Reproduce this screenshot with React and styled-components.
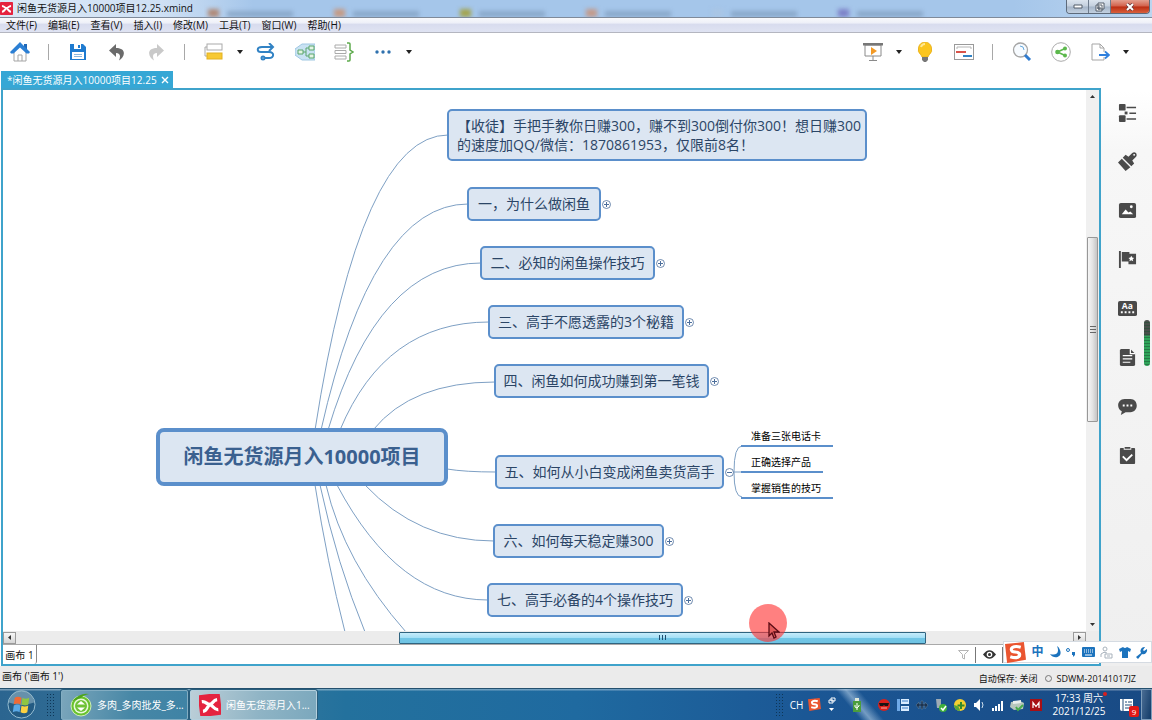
import styled, { createGlobalStyle, css } from "styled-components";

const GlobalStyle = createGlobalStyle`
  * {
    box-sizing: border-box;
  }
  body {
    margin: 0;
    background-color: #ebebeb;
    color: #111;
    font-family: "Open Sans", "Noto Sans CJK SC", sans-serif;
    font-size: 10px;
    line-height: 14px;
  }
  button {
    margin: 0;
    padding: 0;
    border: none;
    background: none;
    color: inherit;
    font: inherit;
  }
  svg {
    display: block;
    flex-shrink: 0;
  }
`;

const Window = styled.div`
  position: relative;
  display: flex;
  flex-direction: column;
  height: 100vh;
  overflow: hidden;
`;

/* ---------- title bar and menu ---------- */

const TitleBar = styled.header`
  display: flex;
  height: 18px;
  overflow: hidden;
  background: linear-gradient(90deg, #dbe8f6 0%, #cfe0f4 14%, #a5c6ea 22%, #a5c6ea 88%, #bcd5ef 100%);
  border-bottom: 1px solid #7f8a9a;
`;
const AppTitle = styled.h1`
  display: flex;
  align-items: center;
  gap: 4px;
  width: 204px;
  height: 16px;
  margin: 0;
  font-size: 10px;
  font-weight: 400;
  white-space: nowrap;
`;
const GhostTabs = styled.div`
  display: flex;
  flex: 1;
  align-items: flex-end;
  overflow: hidden;
`;
const GhostTab = styled.div`
  display: flex;
  align-items: flex-end;
  gap: 8px;
  width: 126px;
  padding-left: 4px;
  filter: blur(2px);
  &::before {
    content: "";
    width: 11px;
    height: 8px;
    background-color: ${(props) => props.$color};
  }
  &::after {
    content: "";
    width: 66px;
    height: 6px;
    background-color: #7f9cbd;
    opacity: 0.7;
  }
`;
const WindowButtons = styled.div`
  display: flex;
  height: 14px;
  margin-right: 2px;
  border: 1px solid #5d6a7a;
  border-top: none;
  border-radius: 0 0 4px 4px;
  overflow: hidden;
`;
const WindowButton = styled.button`
  display: flex;
  align-items: center;
  justify-content: center;
  width: ${(props) => (props.$close ? 38 : 22)}px;
  border-right: 1px solid #6d7b8c;
  background: linear-gradient(#dbe4ee, #c3cfdd 48%, #a5b5c8 52%, #c2d0e0);
  ${(props) =>
    props.$close &&
    css`
      border-right: none;
      background: linear-gradient(#e3a090, #d2604a 48%, #bb2c12 52%, #d9603c);
    `}
`;

const MenuBar = styled.nav`
  display: flex;
  align-items: center;
  gap: 11px;
  height: 15px;
  padding-left: 6px;
  background: linear-gradient(#f8f9fc 0%, #eef0f8 35%, #d8dcee 45%, #dfe3f2 100%);
  border-bottom: 1px solid #b4b6c0;
`;
const MenuItem = styled.button`
  white-space: nowrap;
`;

/* ---------- toolbar ---------- */

const Toolbar = styled.div`
  display: flex;
  align-items: center;
  justify-content: space-between;
  height: 38px;
  padding-right: 20px;
  background-color: #fff;
`;
const ToolGroup = styled.div`
  display: flex;
  align-items: center;
`;
const Tool = styled.button`
  display: flex;
  align-items: center;
  justify-content: center;
  width: ${(props) => (props.$caret ? 13 : 39)}px;
  height: 30px;
`;
const ToolDivider = styled.span`
  width: 1px;
  height: 16px;
  margin: 0 9px;
  background-color: #a8a8a8;
`;

/* ---------- workspace ---------- */

const Workspace = styled.div`
  display: flex;
  flex: 1;
  min-height: 0;
  background-color: #fff;
`;
const Editor = styled.main`
  display: flex;
  flex: 1;
  flex-direction: column;
  min-width: 0;
  padding-left: 1px;
`;
const FileTab = styled.div`
  display: flex;
  align-items: center;
  align-self: flex-start;
  gap: 4px;
  height: 17px;
  padding: 0 4px 0 6px;
  background-color: #36a7d5;
  color: #fff;
  white-space: nowrap;
`;
const EditorFrame = styled.div`
  display: flex;
  flex: 1;
  flex-direction: column;
  min-height: 0;
  border: 2px solid #3fa3cb;
`;
const CanvasRow = styled.div`
  display: flex;
  flex: 1;
  min-height: 0;
`;
const Canvas = styled.section`
  position: relative;
  flex: 1;
  overflow: hidden;
  background-color: #fff;
`;
const Links = styled.svg`
  position: absolute;
  top: 0;
  left: 0;
`;

const Branch = styled.div`
  position: absolute;
  left: ${(props) => props.$x}px;
  top: ${(props) => props.$y}px;
  display: flex;
  align-items: center;
  gap: 1px;
`;
const Topic = styled.div`
  display: flex;
  align-items: center;
  justify-content: center;
  width: ${(props) => props.$width}px;
  min-height: 34px;
  padding: 4px 0 6px;
  border: 2px solid #5b8fcb;
  border-radius: 5px;
  background-color: #dce6f2;
  color: #2b4566;
  font-size: 14px;
  line-height: 19px;
  white-space: pre;
`;
const NoticeTopic = styled(Topic)`
  min-height: 52px;
  padding: 5px 0 5px 8px;
  justify-content: flex-start;
`;
const CentralTopic = styled(Topic)`
  min-height: 58px;
  border: 4px solid #5b8fcb;
  border-radius: 8px;
  color: #3a608f;
  font-size: 20px;
  font-weight: 700;
`;
const Toggle = styled.button`
  display: flex;
`;
const Leaves = styled.ul`
  position: absolute;
  left: 738px;
  top: 331px;
  display: flex;
  flex-direction: column;
  align-items: flex-start;
  margin: 0;
  padding: 0;
  list-style: none;
`;
const Leaf = styled.li`
  height: 26px;
  padding: 8px 12px 0 10px;
  border-bottom: 2px solid #5b8fcb;
  color: #000;
  white-space: nowrap;
`;

const VScroll = styled.div`
  display: flex;
  flex-direction: column;
  width: 13px;
  background-color: #f0f0f0;
`;
const VTrack = styled.div`
  display: grid;
  flex: 1;
  grid-template-rows: 133fr 185fr 195fr;
`;
const VThumb = styled.div`
  grid-row: 2;
  display: flex;
  align-items: center;
  justify-content: center;
  margin: 0 1px;
  border: 1px solid #989898;
  border-radius: 1px;
  background: linear-gradient(90deg, #f6f6f6, #e3e3e3 50%, #c5c5c5);
`;
const ScrollArrow = styled.button`
  display: flex;
  align-items: center;
  justify-content: center;
  width: 13px;
  height: 13px;
`;
const HScroll = styled.div`
  display: flex;
  align-items: center;
  height: 14px;
  padding-right: 13px;
  background-color: #ececec;
  border-bottom: 1px solid #a9a9a9;
`;
const HTrack = styled.div`
  display: grid;
  flex: 1;
  grid-template-columns: 383fr 527fr 147fr;
  height: 12px;
`;
const HThumb = styled.div`
  grid-column: 2;
  display: flex;
  align-items: center;
  justify-content: center;
  border: 1px solid #2f6480;
  border-radius: 1px;
  background: linear-gradient(#c6ecfb, #a5e0f6 45%, #71c6e6 55%, #6fc3e3);
`;
const BoxedArrow = styled(ScrollArrow)`
  height: 12px;
  border: 1px solid #9a9a9a;
  background: linear-gradient(#f7f7f7, #d5d5d5);
`;

const SheetBar = styled.div`
  display: flex;
  align-items: stretch;
  justify-content: space-between;
  height: 19px;
  background-color: #fff;
`;
const SheetTab = styled.button`
  width: 34px;
  border-right: 1px solid #8a8a8a;
  border-bottom-right-radius: 3px;
  white-space: nowrap;
`;
const SheetTools = styled.div`
  display: flex;
  align-items: center;
  margin-right: 96px;
`;
const SheetTool = styled.button`
  display: flex;
  align-items: center;
  justify-content: center;
  width: ${(props) => props.$width}px;
  height: 16px;
  border-right: 1px solid #777;
`;

const Sidebar = styled.aside`
  display: flex;
  flex-direction: column;
  width: 51px;
  padding: 17px 0 0 1px;
  background: linear-gradient(#fff 20px, #f7f7f7 80px, #efefef);
`;
const SideButton = styled.button`
  display: flex;
  align-items: center;
  justify-content: center;
  height: 49px;
`;

const StatusBar = styled.footer`
  display: flex;
  justify-content: space-between;
  height: 22px;
  padding: 3px 16px 0 2px;
  background-color: #ebebeb;
`;
const StatusInfo = styled.div`
  display: flex;
  align-items: center;
  gap: 8px;
  font-size: 9px;
`;
const HostName = styled.span`
  display: flex;
  align-items: center;
  gap: 4px;
  &::before {
    content: "";
    width: 5px;
    height: 5px;
    border: 1px solid #777;
    border-radius: 50%;
  }
`;

/* ---------- things floating over the window ---------- */

const ClickSpot = styled.div`
  position: absolute;
  left: 749px;
  top: 604px;
  width: 38px;
  height: 38px;
  border-radius: 50%;
  background-color: rgba(255, 50, 50, 0.62);
  svg {
    position: absolute;
    left: 19px;
    top: 18px;
  }
`;
const VolumeMeter = styled.div`
  position: absolute;
  right: 2px;
  top: 320px;
  width: 6px;
  height: 46px;
  border-radius: 3px;
  background: repeating-linear-gradient(transparent 0 2px, rgba(30, 80, 50, 0.5) 2px 3px),
    linear-gradient(#4a4f4c 32%, #2fa45a 36%);
`;
const ImeBar = styled.div`
  position: absolute;
  right: 0;
  bottom: 57px;
  display: flex;
  align-items: center;
  justify-content: space-between;
  width: 149px;
  height: 22px;
  padding: 0 3px 0 1px;
  border: 1px solid #d5dbe2;
  background-color: #fff;
  color: #1c73bd;
  font-size: 12px;
  font-weight: 700;
`;

/* ---------- taskbar ---------- */

const Taskbar = styled.div`
  display: flex;
  align-items: center;
  height: 32px;
  border-top: 1px solid #24506e;
  background: linear-gradient(rgba(255, 255, 255, 0.35) 1px, transparent 2px),
    linear-gradient(90deg, #2b6590 0%, #3a7a9c 20%, #23719d 30%, #1f6aa0 50%, #1b5795 70%, #194a84 100%);
  color: #fff;
`;
const StartButton = styled.button`
  display: flex;
  justify-content: center;
  width: 43px;
`;
const Grip = styled.span`
  width: 8px;
  height: 24px;
  margin: 0 5px 0 3px;
  background-image: radial-gradient(circle, #0e3657 1px, transparent 1px);
  background-size: 3px 3px;
`;
const TaskButton = styled.button`
  display: flex;
  align-items: center;
  gap: 5px;
  width: 127px;
  height: 30px;
  margin-left: 2px;
  padding-left: 8px;
  border: 1px solid ${(props) => (props.$active ? "#b4d0dd" : "#82adc2")};
  border-radius: 2px;
  background: ${(props) =>
    props.$active
      ? "linear-gradient(100deg, #bccfd8, #8fb4c5 55%, #7ba8bd)"
      : "linear-gradient(100deg, #7ba6bb, #4787a6 55%, #3f83a5)"};
  box-shadow: 0 0 0 1px #285d7c;
  white-space: nowrap;
`;
const Tray = styled.div`
  display: flex;
  align-items: center;
  height: 100%;
  margin-left: auto;
  background: linear-gradient(50deg, transparent 68px, rgba(190, 215, 235, 0.55) 76px, transparent 86px);
`;
const TrayButton = styled.button`
  display: flex;
  align-items: center;
  justify-content: center;
  width: ${(props) => props.$width || 19}px;
  height: 24px;
`;
const Clock = styled.time`
  position: relative;
  width: 68px;
  text-align: center;
  line-height: 13px;
  &::after {
    content: "";
    position: absolute;
    top: 0;
    right: 6px;
    width: 4px;
    height: 4px;
    border-radius: 50%;
    background-color: #d81e1e;
  }
`;
const NewsButton = styled(TrayButton)`
  position: relative;
`;
const NewsCount = styled.span`
  position: absolute;
  right: 2px;
  bottom: 0;
  width: 10px;
  height: 11px;
  border-radius: 2px;
  background-color: #e01717;
  font-size: 8px;
  line-height: 11px;
`;
const ShowDesktop = styled.button`
  width: 11px;
  height: 100%;
  border: 1px solid #7d9dbb;
  background: linear-gradient(100deg, #4a6d94, #123b68);
`;

/* ---------- data ---------- */

const menus = ["文件(F)", "编辑(E)", "查看(V)", "插入(I)", "修改(M)", "工具(T)", "窗口(W)", "帮助(H)"];
const ghostColors = ["#b08a78", "#c59a84", "#a3a44e", "#c39a8a", "#a9c5e4", "#7d82c8"];

const topics = [
  { x: 464, y: 97, width: 134, text: "一，为什么做闲鱼" },
  { x: 477, y: 156, width: 175, text: "二、必知的闲鱼操作技巧" },
  { x: 485, y: 215, width: 196, text: "三、高手不愿透露的3个秘籍" },
  { x: 491, y: 274, width: 215, text: "四、闲鱼如何成功赚到第一笔钱" },
  { x: 492, y: 365, width: 229, text: "五、如何从小白变成闲鱼卖货高手", open: true },
  { x: 490, y: 434, width: 171, text: "六、如何每天稳定赚300" },
  { x: 484, y: 493, width: 196, text: "七、高手必备的4个操作技巧" },
];
const leaves = ["准备三张电话卡", "正确选择产品", "掌握销售的技巧"];

const links = [
  "M312 340 Q358 45 445 45",
  "M318 340 Q369 114 465 114",
  "M325 340 Q375 173 478 173",
  "M337 340 Q382 232 486 232",
  "M370 340 Q409 292 492 292",
  "M444 379 Q462 382 493 382",
  "M362 395 Q415 451 491 451",
  "M334 395 Q395 510 485 510",
  "M323 395 Q341 472 403 542",
  "M317 395 Q334 474 362 542",
  "M312 395 Q324 472 342 542",
  "M730 382 H740",
  "M739 356 Q731 356 731 382 Q731 407 739 407",
];

/* ---------- icons ---------- */

const Caret = () => (
  <svg width="6" height="4" viewBox="0 0 6 4">
    <path d="M0 0h6L3 4z" fill="#222" />
  </svg>
);

const XmindLogo = ({ size, tilt = 0 }) => (
  <svg width={size} height={size} viewBox="0 0 20 20">
    <g transform={`rotate(${tilt} 10 10)`}>
      <rect width="20" height="20" rx="1" fill="#e5233f" />
      <path d="M3 6c4 0 4 3.500 7 3.500S13 6 17 6M3 15c4 0 4-4 7-5.500 3 1.500 3 5.500 7 5.500" fill="none" stroke="#fff" strokeWidth="3" />
    </g>
  </svg>
);

const HomeIcon = () => (
  <svg width="20" height="20" viewBox="0 0 20 20">
    <path d="M4 9v10h12V9l-6-5zM8 19v-6h4v6" fill="#fff" stroke="#a5a5a5" />
    <path d="M14 2h3v6h-3z" fill="#2068b8" />
    <path d="M10 0 0 10l1 1.500h2.500L10 5.500l6.500 6H19l1-1.500z" fill="#2b7fd4" />
  </svg>
);

const SaveIcon = () => (
  <svg width="18" height="18" viewBox="0 0 18 18">
    <path d="M1 1h13l3 3v13H1z" fill="#1f7bd0" />
    <path d="M5 1h7v5H5zM3 9h12v7H3z" fill="#fff" />
    <path d="M9 2h2v3H9z" fill="#1f7bd0" />
    <path d="M5 11.500h8M5 13.500h8" stroke="#8cb8df" />
  </svg>
);

const ArrowBack = ({ color, flip }) => (
  <svg width="16" height="18" viewBox="0 0 16 18">
    <path
      d="M7 1 0 7.500 7 14v-4c4 0 5 3 3 7.500C16 14 18 5 7 5z"
      fill={color}
      transform={flip ? "matrix(-1 0 0 1 16 0)" : undefined}
    />
  </svg>
);

const TopicIcon = () => (
  <svg width="20" height="18" viewBox="0 0 20 18">
    <path d="M3 4H1v9h2" fill="none" stroke="#aaa" />
    <rect x="3" y="1" width="15" height="6" fill="#fff" stroke="#aaa" />
    <rect x="3" y="10" width="15" height="6" fill="#f7c933" stroke="#e2b122" />
  </svg>
);

const RelationIcon = () => (
  <svg width="20" height="18" viewBox="0 0 20 18" fill="none" stroke="#3182c4" strokeWidth="2">
    <path d="M17 4H6C0 4 1 9 5 9h8c6 0 5 6 0 6H8" />
    <path d="m13 0 4 4-4 4" />
    <circle cx="7" cy="15" r="1.500" fill="#fff" />
  </svg>
);

const BoundaryIcon = () => (
  <svg width="20" height="18" viewBox="0 0 20 18">
    <path d="M0 6 7 1h13v16H7l-7-5z" fill="#c9e2f3" stroke="#9fc7e2" />
    <path d="M8 9h3M14 5h-3v8h3" fill="none" stroke="#5aa66c" />
    <path d="M3 7h5v4H3zM14 3h5v4h-5zM14 11h5v4h-5z" fill="#e4f4e4" stroke="#5aa66c" />
  </svg>
);

const SummaryIcon = () => (
  <svg width="20" height="20" viewBox="0 0 20 20" fill="none">
    <path d="M1 3h11v3H1zM1 8.500h11v3H1zM1 14h11v3H1z" stroke="#aaa" />
    <path d="M13 1h2q1 0 1 1v6l3 2-3 2v6q0 1-1 1h-2" stroke="#5daa4c" strokeWidth="1.500" />
  </svg>
);

const DotsIcon = () => (
  <svg width="16" height="4" viewBox="0 0 16 4" fill="#2f71ae">
    <circle cx="2" cy="2" r="1.700" />
    <circle cx="8" cy="2" r="1.700" />
    <circle cx="14" cy="2" r="1.700" />
  </svg>
);

const PresentIcon = () => (
  <svg width="20" height="20" viewBox="0 0 20 20">
    <path d="M2 3h16v11H2zM10 14v4M6 18.500h8" fill="#fff" stroke="#8a8a8a" />
    <path d="M0 1h20v2.500H0z" fill="#777" />
    <path d="m8 5 6 4-6 4z" fill="#f39a26" />
  </svg>
);

const BulbIcon = () => (
  <svg width="16" height="20" viewBox="0 0 16 20">
    <path d="M8 0a7.300 7.300 0 0 0-4 13l1 2h6l1-2A7.300 7.300 0 0 0 8 0z" fill="#fbc51f" stroke="#e6ad18" strokeWidth="0.800" />
    <path d="M4 5q1-3 4-3" stroke="#ffe893" strokeWidth="2" fill="none" />
    <path d="M5 15h6v3l-2 2H7l-2-2z" fill="#777" />
  </svg>
);

const NoteIcon = () => (
  <svg width="20" height="18" viewBox="0 0 20 18">
    <rect x="0.500" y="1.500" width="19" height="15" fill="#fff" stroke="#9a9a9a" />
    <path d="M3 6V4h14v2" fill="none" stroke="#b5b5b5" />
    <path d="M2 9h10" stroke="#d9534a" strokeWidth="2" />
    <path d="M9 13h9" stroke="#3182c4" strokeWidth="2" />
  </svg>
);

const SearchIcon = () => (
  <svg width="20" height="20" viewBox="0 0 20 20" fill="none">
    <circle cx="8.500" cy="8" r="7" fill="#f7fbff" stroke="#a5a5a5" strokeWidth="1.300" />
    <path d="M8 4q4 0 4 4" stroke="#67a9dd" />
    <path d="m13 13 5 5" stroke="#2f7bd0" strokeWidth="3" />
  </svg>
);

const ShareIcon = () => (
  <svg width="20" height="20" viewBox="0 0 20 20">
    <circle cx="10" cy="10" r="9.300" fill="#fff" stroke="#aaa" />
    <path d="M14 6.500 6.500 10l7.500 3.500" fill="none" stroke="#5cb84c" strokeWidth="1.600" />
    <g fill="#5cb84c">
      <circle cx="14" cy="6.500" r="2" />
      <circle cx="6.500" cy="10" r="2.300" />
      <circle cx="14" cy="13.500" r="2" />
    </g>
  </svg>
);

const ExportIcon = () => (
  <svg width="20" height="18" viewBox="0 0 20 18" fill="none">
    <path d="M14 9V5l-4-4H2v16h12v-3M10 1v4h4" stroke="#a5a5a5" />
    <path d="M9 12h9M15 8.500l4 3.500-4 3.500" stroke="#2f80dd" strokeWidth="1.800" />
  </svg>
);

const sideIcons = [
  {
    name: "大纲",
    art: (
      <>
        <rect x="1" y="1" width="7" height="7" rx="1" />
        <rect x="1" y="13" width="7" height="7" rx="1" />
        <rect x="7" y="9" width="3" height="3" />
        <path d="M9 4h10v1.500H9zM12 10h7v1.500h-7zM9 16h10v1.500H9z" />
      </>
    ),
  },
  {
    name: "格式",
    art: (
      <>
        <path d="m0 11 4-4 9 9-5 4zM5 6l3-3 3 2 4-4c3-2 6 1 4 4l-4 4 2 3-3 3z" />
        <circle cx="17" cy="3" r="1" fill="#fff" />
      </>
    ),
  },
  {
    name: "图片",
    art: (
      <>
        <rect x="1" y="2" width="18" height="16" rx="2" />
        <path d="m4 14 4-5 3 3 2-1 3 3z" fill="#fff" />
        <circle cx="14" cy="6" r="1.500" fill="#fff" />
      </>
    ),
  },
  {
    name: "图标",
    art: (
      <>
        <path d="M1 1h2v18H1zM4 2h8v2h7v11h-8v-3H4z" />
        <path d="m14 6 1 2 2 .3-1.500 1.500.5 2-2-1-2 1 .500-2L11 8.300 13 8z" fill="#fff" />
      </>
    ),
  },
  {
    name: "样式",
    art: (
      <>
        <rect y="2" width="20" height="16" rx="2" />
        <text x="4" y="10" fill="#fff" fontSize="9" fontWeight="700">
          Aa
        </text>
        <path d="M3 14h14" stroke="#fff" strokeWidth="2" strokeDasharray="2 2" />
      </>
    ),
  },
  {
    name: "备注",
    art: (
      <>
        <path d="M3 1h10l5 5v11q0 2-2 2H4q-2 0-2-2V2z" />
        <path d="M13 1v5h5M5 8h10M5 11.500h10M5 15h8" fill="none" stroke="#fff" strokeWidth="1.300" />
      </>
    ),
  },
  {
    name: "批注",
    art: (
      <>
        <path d="M7 2h6c9 0 9 14 0 14H8l-5 3 1-4C-2 12-1 2 7 2z" />
        <path d="M5 8h2v2H5zM9 8h2v2H9zM13 8h2v2h-2z" fill="#fff" />
      </>
    ),
  },
  {
    name: "任务",
    art: (
      <>
        <path d="M3 2h3v2h8V2h3q1 0 1 1v15q0 1-1 1H3q-1 0-1-1V3q0-1 1-1zM7 1h6v2H7z" />
        <path d="m5 11 4 4 6-6" fill="none" stroke="#fff" strokeWidth="2" />
      </>
    ),
  },
];

const ToggleIcon = ({ open }) => (
  <svg width="9" height="9" viewBox="0 0 9 9" fill="none" stroke="#4d6f9c">
    <circle cx="4.500" cy="4.500" r="4" fill="#fff" strokeWidth="0.800" />
    <path d={open ? "M2 4.500h5" : "M2 4.500h5M4.500 2v5"} />
  </svg>
);

const SogouLogo = ({ size }) => (
  <svg width={size} height={size} viewBox="0 0 20 20">
    <path d="m0 2 18-2 2 17-18 3z" fill="#ea5530" />
    <path d="M15 5C8 3 4 6 7 9c2 1 7 0 7 3 0 4-6 3-9 2" fill="none" stroke="#fff" strokeWidth="3" />
  </svg>
);

const StartOrb = () => (
  <svg width="29" height="29" viewBox="0 0 30 30">
    <circle cx="15" cy="15" r="14" fill="#235b83" stroke="#98bfd2" />
    <path d="M2 13a13 13 0 0 1 26 0Q15 18 2 13z" fill="#8cafc0" opacity="0.650" />
    <path d="M8 8q3-2 7 0l-1 7q-3-2-7 0z" fill="#f06a35" />
    <path d="M16 8q3 2 7 0l-1 7q-3 2-7 0z" fill="#8fc642" />
    <path d="M7 16q3-2 7 0l-1 7q-3-2-7 0z" fill="#5aa9e6" />
    <path d="M15 16q3 2 7 0l-1 7q-3 2-7 0z" fill="#fbd141" />
  </svg>
);

const BrowserIcon = () => (
  <svg width="22" height="24" viewBox="1 0 22 24">
    <circle cx="12" cy="13" r="10" fill="#69c22e" stroke="#cdeeb4" />
    <path d="M3 8Q12-1 20 1q-6 1-9 5" fill="#4ea51d" />
    <circle cx="12" cy="13" r="7.500" fill="#e9f8dc" />
    <circle cx="12" cy="13" r="6" fill="#6fc238" />
    <path d="M8 11.500h8L12 8zM8 14.500h8L12 18z" fill="#fff" />
  </svg>
);

const trayIcons = [
  {
    name: "安全",
    art: (
      <>
        <circle cx="7" cy="7" r="6" fill="#d8211c" />
        <path d="M2 5h10l-1 3H8L7 7 6 8H3z" fill="#151515" />
        <path d="M4 10h6" stroke="#f3b0a8" />
      </>
    ),
  },
  {
    name: "列表",
    art: (
      <>
        <path d="M1 1h3v12H1z" fill="#6faae8" />
        <path d="M5 1h8v5H5zM5 8h8v5H5z" fill="#d9ecff" />
        <path d="M6 3h6M6 10h6" stroke="#3d7fc6" />
      </>
    ),
  },
  {
    name: "设备",
    art: <path d="m1 7 3-3v2h2V3h2v3h2V4l3 3-3 4V8H8v3H6V8H4v3z" fill="#1c3350" stroke="#6584a2" strokeWidth="0.500" />,
  },
  {
    name: "移除硬件",
    art: (
      <>
        <path d="M2 1h5v9H3z" fill="#9eabb5" />
        <circle cx="9" cy="10" r="4" fill="#3faf3b" />
        <path d="m7 10 2 2 3-4" fill="none" stroke="#fff" strokeWidth="1.500" />
      </>
    ),
  },
  {
    name: "卫士",
    art: (
      <>
        <circle cx="7" cy="7" r="6" fill="#f4cf31" />
        <path d="M1 7a6 6 0 0 0 6 6q0-5-6-6z" fill="#55a637" />
        <path d="M8 4v7M4.500 7.500h7" stroke="#348a2a" strokeWidth="2" />
      </>
    ),
  },
  {
    name: "音量",
    art: (
      <>
        <path d="M2 5h2l4-4v12L4 9H2z" fill="#fff" />
        <path d="M10 4q2 3 0 6" fill="none" stroke="#cfe0ee" />
      </>
    ),
  },
  {
    name: "网络",
    art: <path d="M1 10h2v3H1zM4 8h2v5H4zM7 6h2v7H7zM10 3h2v10h-2z" fill="#fff" />,
  },
  {
    name: "打印机",
    art: (
      <>
        <path d="m1 4 9-1 4 2-1 6-9 1-4-3z" fill="#b8c7bd" />
        <path d="m3 3 8-1v3L3 6z" fill="#e9eeeb" />
        <path d="m6 9 2 3 5-5" fill="none" stroke="#47ad4b" strokeWidth="2" />
      </>
    ),
  },
  {
    name: "阅读器",
    art: (
      <>
        <rect x="1" y="1" width="12" height="12" fill="#a80f14" />
        <path d="M4 10V4.500l3 4 3-4V10" fill="none" stroke="#fff" strokeWidth="1.200" />
      </>
    ),
  },
];

function MindMap() {
  return (
    <Canvas>
      <Links width="1084" height="542" fill="none" stroke="#7ea0c4">
        {links.map((d) => (
          <path key={d} d={d} />
        ))}
      </Links>
      <Branch $x={153} $y={338}>
        <CentralTopic $width={292}>闲鱼无货源月入10000项目</CentralTopic>
      </Branch>
      <Branch $x={444} $y={19}>
        <NoticeTopic $width={420}>
          {"【收徒】手把手教你日赚300，赚不到300倒付你300！想日赚300\n的速度加QQ/微信：1870861953，仅限前8名！"}
        </NoticeTopic>
      </Branch>
      {topics.map((topic) => (
        <Branch key={topic.text} $x={topic.x} $y={topic.y}>
          <Topic $width={topic.width}>{topic.text}</Topic>
          <Toggle aria-label={topic.open ? "收起" : "展开"}>
            <ToggleIcon open={topic.open} />
          </Toggle>
        </Branch>
      ))}
      <Leaves>
        {leaves.map((leaf) => (
          <Leaf key={leaf}>{leaf}</Leaf>
        ))}
      </Leaves>
    </Canvas>
  );
}

function TopToolbar() {
  return (
    <Toolbar>
      <ToolGroup>
        <Tool aria-label="主页"><HomeIcon /></Tool>
        <ToolDivider />
        <Tool aria-label="保存"><SaveIcon /></Tool>
        <Tool aria-label="撤销"><ArrowBack color="#6b6b6b" /></Tool>
        <Tool aria-label="重做"><ArrowBack color="#c9c9c9" flip /></Tool>
        <ToolDivider />
        <Tool aria-label="主题"><TopicIcon /></Tool>
        <Tool $caret aria-label="更多主题"><Caret /></Tool>
        <Tool aria-label="联系"><RelationIcon /></Tool>
        <Tool aria-label="外框"><BoundaryIcon /></Tool>
        <Tool aria-label="概要"><SummaryIcon /></Tool>
        <Tool aria-label="更多"><DotsIcon /></Tool>
        <Tool $caret aria-label="更多工具"><Caret /></Tool>
      </ToolGroup>
      <ToolGroup>
        <Tool aria-label="演示"><PresentIcon /></Tool>
        <Tool $caret aria-label="演示选项"><Caret /></Tool>
        <Tool aria-label="头脑风暴"><BulbIcon /></Tool>
        <Tool aria-label="甘特图"><NoteIcon /></Tool>
        <ToolDivider />
        <Tool aria-label="搜索"><SearchIcon /></Tool>
        <Tool aria-label="分享"><ShareIcon /></Tool>
        <Tool aria-label="导出"><ExportIcon /></Tool>
        <Tool $caret aria-label="导出选项"><Caret /></Tool>
      </ToolGroup>
    </Toolbar>
  );
}

function DesktopTaskbar() {
  return (
    <Taskbar>
      <StartButton aria-label="开始"><StartOrb /></StartButton>
      <Grip />
      <TaskButton>
        <BrowserIcon />
        多肉_多肉批发_多...
      </TaskButton>
      <TaskButton $active>
        <XmindLogo size={22} tilt={-7} />
        闲鱼无货源月入1...
      </TaskButton>
      <Tray>
        <Grip />
        <TrayButton $width={17}>CH</TrayButton>
        <TrayButton aria-label="搜狗输入法"><SogouLogo size={13} /></TrayButton>
        <TrayButton $width={16} aria-label="还原语言栏">
          <svg width="8" height="16" viewBox="0 0 8 16">
            <path d="M3 1h4v3H3zM1 3h4v3H1z" fill="none" stroke="#fff" />
            <path d="M1 11h5l-2.500 3z" fill="#fff" />
          </svg>
        </TrayButton>
        <TrayButton $width={34} aria-label="U盘">
          <svg width="10" height="14" viewBox="0 0 10 14">
            <path d="M3 0h4v3H3z" fill="#dfe9dd" />
            <path d="M1 3h8v11H1z" fill="#4a9d3d" />
            <path d="M5 5v7M3 7v2l2 1 2-2V7" fill="none" stroke="#fff" />
          </svg>
        </TrayButton>
        {trayIcons.map((icon) => (
          <TrayButton key={icon.name} aria-label={icon.name}>
            <svg width="14" height="14" viewBox="0 0 14 14">
              {icon.art}
            </svg>
          </TrayButton>
        ))}
        <Clock>
          17:33 周六
          <br />
          2021/12/25
        </Clock>
        <NewsButton $width={28}>
          <svg width="16" height="14" viewBox="0 0 16 14">
            <path d="M1 1h13v12H3q-2 0-2-2z" fill="#fff" />
            <path d="M4 1v12M6 4h2M9 4h4M6 7h7M6 10h5" stroke="#214a78" />
          </svg>
          <NewsCount>9</NewsCount>
        </NewsButton>
        <ShowDesktop aria-label="显示桌面" />
      </Tray>
    </Taskbar>
  );
}

function InputMethodBar() {
  return (
    <ImeBar>
      <SogouLogo size={21} />
      中
      <svg width="12" height="12" viewBox="0 0 12 12">
        <path d="M8 0c3 7-1 10-7 8 4 6 13 3 10-4Q10 1 8 0z" fill="#1c73bd" />
      </svg>
      <svg width="10" height="10" viewBox="0 0 10 10">
        <circle cx="2" cy="3" r="1.500" fill="none" stroke="#1c73bd" />
        <path d="M6 5h3v3L7 10V8H6z" fill="#1c73bd" />
      </svg>
      <svg width="13" height="10" viewBox="0 0 13 10">
        <rect width="13" height="10" rx="1" fill="#1c73bd" />
        <path d="M2 3h9M2 5h9" stroke="#fff" strokeDasharray="1 1" />
        <path d="M3 8h7" stroke="#fff" />
      </svg>
      <svg width="13" height="13" viewBox="0 0 13 13" fill="none" stroke="#a9b3bd">
        <circle cx="5" cy="3" r="2" />
        <path d="M1 11V8q3-3 6-1M5 8h7v4H5zM7 10h3" />
      </svg>
      <svg width="12" height="12" viewBox="0 0 12 12">
        <path d="M4 1q2 2 4 0l4 2-1 3-2-1v7H3V5L1 6 0 3z" fill="#1c73bd" />
      </svg>
      <svg width="12" height="13" viewBox="0 0 12 13">
        <path d="M11 3a4 4 0 0 1-5 5l-4 5-2-2 5-4A4 4 0 0 1 9 1L7 4l1 1z" fill="#1c73bd" />
      </svg>
    </ImeBar>
  );
}

function App() {
  return (
    <Window>
      <GlobalStyle />
      <TitleBar>
        <AppTitle>
          <XmindLogo size={13} />
          闲鱼无货源月入10000项目12.25.xmind
        </AppTitle>
        <GhostTabs>
          {ghostColors.map((color) => (
            <GhostTab key={color} $color={color} />
          ))}
        </GhostTabs>
        <WindowButtons>
          <WindowButton aria-label="最小化">
            <svg width="10" height="5" viewBox="0 0 10 5">
              <path d="M1 1h8v3H1z" fill="#fff" stroke="#525c68" />
            </svg>
          </WindowButton>
          <WindowButton aria-label="还原">
            <svg width="10" height="10" viewBox="0 0 10 10" fill="#fff" stroke="#525c68">
              <path d="M3 1h6v6H3zM1 3h6v6H1zM3 5h2v2H3z" />
            </svg>
          </WindowButton>
          <WindowButton $close aria-label="关闭">
            <svg width="10" height="8" viewBox="0 0 10 8">
              <path d="m2 1 6 6M8 1 2 7" stroke="#6b3a3a" strokeWidth="3.500" />
              <path d="m2 1 6 6M8 1 2 7" stroke="#fff" strokeWidth="2" />
            </svg>
          </WindowButton>
        </WindowButtons>
      </TitleBar>
      <MenuBar>
        {menus.map((menu) => (
          <MenuItem key={menu}>{menu}</MenuItem>
        ))}
      </MenuBar>
      <TopToolbar />
      <Workspace>
        <Editor>
          <FileTab>
            *闲鱼无货源月入10000项目12.25
            <button aria-label="关闭标签">
              <svg width="8" height="8" viewBox="0 0 8 8">
                <path d="m1 1 6 6M7 1 1 7" stroke="#fff" strokeWidth="1.400" />
              </svg>
            </button>
          </FileTab>
          <EditorFrame>
            <CanvasRow>
              <MindMap />
              <VScroll>
                <ScrollArrow aria-label="向上滚动">
                  <svg width="5" height="3" viewBox="0 0 5 3">
                    <path d="M0 3h5L2.500 0z" fill="#333" />
                  </svg>
                </ScrollArrow>
                <VTrack>
                  <VThumb>
                    <svg width="6" height="7" viewBox="0 0 6 7">
                      <path d="M0 .5h6M0 3.500h6M0 6.500h6" stroke="#666" />
                    </svg>
                  </VThumb>
                </VTrack>
                <ScrollArrow aria-label="向下滚动">
                  <svg width="5" height="3" viewBox="0 0 5 3">
                    <path d="M0 0h5L2.500 3z" fill="#333" />
                  </svg>
                </ScrollArrow>
              </VScroll>
            </CanvasRow>
            <HScroll>
              <BoxedArrow aria-label="向左滚动">
                <svg width="3" height="5" viewBox="0 0 3 5">
                  <path d="M3 0v5L0 2.500z" fill="#333" />
                </svg>
              </BoxedArrow>
              <HTrack>
                <HThumb>
                  <svg width="7" height="5" viewBox="0 0 7 5">
                    <path d="M.5 0v5M3.500 0v5M6.500 0v5" stroke="#1f4d6e" />
                  </svg>
                </HThumb>
              </HTrack>
              <BoxedArrow aria-label="向右滚动">
                <svg width="3" height="5" viewBox="0 0 3 5">
                  <path d="M0 0v5l3-2.500z" fill="#333" />
                </svg>
              </BoxedArrow>
            </HScroll>
            <SheetBar>
              <SheetTab>画布 1</SheetTab>
              <SheetTools>
                <SheetTool $width={24} aria-label="筛选">
                  <svg width="11" height="10" viewBox="0 0 11 10">
                    <path d="M.5 .5h10l-4 4V9l-2-1V4.500z" fill="none" stroke="#b5b5b5" />
                  </svg>
                </SheetTool>
                <SheetTool $width={27} aria-label="显示">
                  <svg width="13" height="9" viewBox="0 0 13 9">
                    <path d="M0 4.500q6.500-8.500 13 0-6.500 8.500-13 0z" fill="#333" />
                    <circle cx="6.500" cy="4.500" r="2.800" fill="#fff" />
                    <circle cx="6.500" cy="4.500" r="1.500" fill="#333" />
                  </svg>
                </SheetTool>
              </SheetTools>
            </SheetBar>
          </EditorFrame>
        </Editor>
        <Sidebar>
          {sideIcons.map((icon) => (
            <SideButton key={icon.name} aria-label={icon.name}>
              <svg width="19" height="19" viewBox="0 0 20 20" fill="#4a4a4a">
                {icon.art}
              </svg>
            </SideButton>
          ))}
        </Sidebar>
      </Workspace>
      <StatusBar>
        <span>画布 ('画布 1')</span>
        <StatusInfo>
          <span>自动保存: 关闭</span>
          <HostName>SDWM-20141017JZ</HostName>
        </StatusInfo>
      </StatusBar>
      <DesktopTaskbar />
      <ClickSpot>
        <svg width="12" height="18" viewBox="0 0 12 18">
          <path d="M1 1v13l3-3 2 5 2-1-2-5h5z" fill="#e05a5a" stroke="#5a0b14" strokeWidth="1.300" />
        </svg>
      </ClickSpot>
      <VolumeMeter />
      <InputMethodBar />
    </Window>
  );
}

export default App;
